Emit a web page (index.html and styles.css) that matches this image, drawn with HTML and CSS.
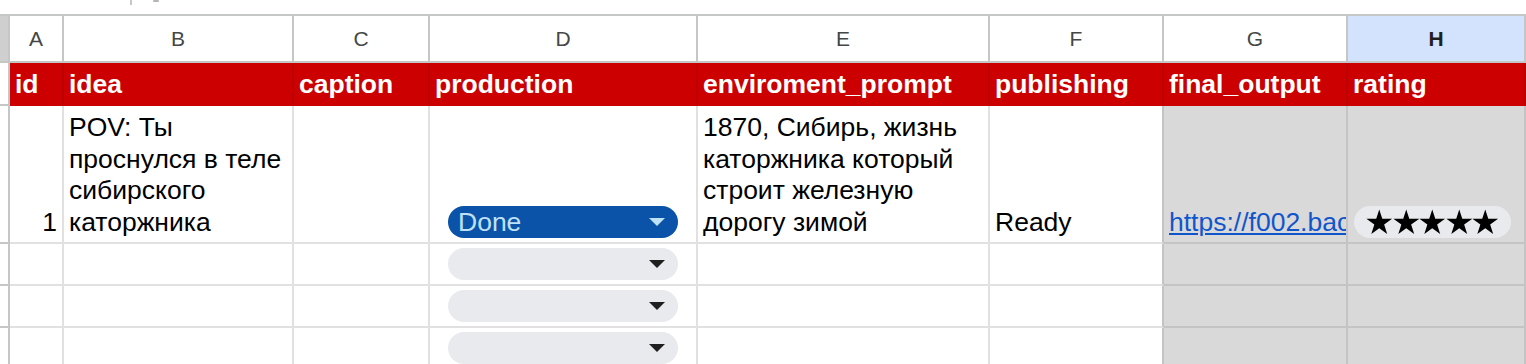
FILE: index.html
```html
<!DOCTYPE html>
<html lang="ru">
<head>
<meta charset="utf-8">
<title>Лист</title>
<link rel="stylesheet" href="styles.css">
</head>
<body>
<div class="toolbar-edge">
  <span class="toolbar-sep"></span>
  <span class="toolbar-mark"></span>
</div>

<div class="grid">
  <!-- column letters -->
  <div class="corner"></div>
  <div class="col-head">A</div>
  <div class="col-head">B</div>
  <div class="col-head">C</div>
  <div class="col-head">D</div>
  <div class="col-head">E</div>
  <div class="col-head">F</div>
  <div class="col-head">G</div>
  <div class="col-head col-head--selected">H</div>

  <!-- title row -->
  <div class="row-head"></div>
  <div class="cell cell--title"><span>id</span></div>
  <div class="cell cell--title"><span>idea</span></div>
  <div class="cell cell--title"><span>caption</span></div>
  <div class="cell cell--title"><span>production</span></div>
  <div class="cell cell--title"><span>enviroment_prompt</span></div>
  <div class="cell cell--title"><span>publishing</span></div>
  <div class="cell cell--title"><span>final_output</span></div>
  <div class="cell cell--title"><span>rating</span></div>

  <!-- row 1 -->
  <div class="row-head"></div>
  <div class="cell cell--num"><span>1</span></div>
  <div class="cell"><span>POV: Ты проснулся в теле сибирского каторжника</span></div>
  <div class="cell"></div>
  <div class="cell cell--chip">
    <span class="dropdown dropdown--done"><span class="dropdown-label">Done</span><span class="dropdown-arrow"></span></span>
  </div>
  <div class="cell"><span>1870, Сибирь, жизнь каторжника который строит железную дорогу зимой</span></div>
  <div class="cell cell--edge"><span>Ready</span></div>
  <div class="cell cell--shaded"><a class="link" href="#">https://f002.backblazeb2.com/file/output/final.mp4</a></div>
  <div class="cell cell--shaded cell--rating">
    <span class="rating">
      <svg class="star" viewBox="-13.25 -14 26.5 26"><polygon points="0,-13.5 3.03,-4.17 12.84,-4.17 4.9,1.59 7.94,10.92 0,5.16 -7.94,10.92 -4.9,1.59 -12.84,-4.17 -3.03,-4.17"/></svg>
      <svg class="star" viewBox="-13.25 -14 26.5 26"><polygon points="0,-13.5 3.03,-4.17 12.84,-4.17 4.9,1.59 7.94,10.92 0,5.16 -7.94,10.92 -4.9,1.59 -12.84,-4.17 -3.03,-4.17"/></svg>
      <svg class="star" viewBox="-13.25 -14 26.5 26"><polygon points="0,-13.5 3.03,-4.17 12.84,-4.17 4.9,1.59 7.94,10.92 0,5.16 -7.94,10.92 -4.9,1.59 -12.84,-4.17 -3.03,-4.17"/></svg>
      <svg class="star" viewBox="-13.25 -14 26.5 26"><polygon points="0,-13.5 3.03,-4.17 12.84,-4.17 4.9,1.59 7.94,10.92 0,5.16 -7.94,10.92 -4.9,1.59 -12.84,-4.17 -3.03,-4.17"/></svg>
      <svg class="star" viewBox="-13.25 -14 26.5 26"><polygon points="0,-13.5 3.03,-4.17 12.84,-4.17 4.9,1.59 7.94,10.92 0,5.16 -7.94,10.92 -4.9,1.59 -12.84,-4.17 -3.03,-4.17"/></svg>
    </span>
  </div>

  <!-- row 2 -->
  <div class="row-head"></div>
  <div class="cell"></div>
  <div class="cell"></div>
  <div class="cell"></div>
  <div class="cell cell--chip"><span class="dropdown"><span class="dropdown-arrow"></span></span></div>
  <div class="cell"></div>
  <div class="cell cell--edge"></div>
  <div class="cell cell--shaded"></div>
  <div class="cell cell--shaded"></div>

  <!-- row 3 -->
  <div class="row-head"></div>
  <div class="cell"></div>
  <div class="cell"></div>
  <div class="cell"></div>
  <div class="cell cell--chip"><span class="dropdown"><span class="dropdown-arrow"></span></span></div>
  <div class="cell"></div>
  <div class="cell cell--edge"></div>
  <div class="cell cell--shaded"></div>
  <div class="cell cell--shaded"></div>

  <!-- row 4 -->
  <div class="row-head"></div>
  <div class="cell"></div>
  <div class="cell"></div>
  <div class="cell"></div>
  <div class="cell cell--chip"><span class="dropdown"><span class="dropdown-arrow"></span></span></div>
  <div class="cell"></div>
  <div class="cell cell--edge"></div>
  <div class="cell cell--shaded"></div>
  <div class="cell cell--shaded"></div>
</div>
</body>
</html>
```

FILE: styles.css
```css
* {
  box-sizing: border-box;
}

html,
body {
  margin: 0;
}

body {
  width: 1526px;
  height: 364px;
  overflow: hidden;
  background: #fff;
  font-family: "Liberation Sans", Arial, sans-serif;
}

/* bottom edge of the toolbar above the grid */
.toolbar-edge {
  height: 14px;
  display: flex;
  align-items: flex-start;
  gap: 21px;
  padding-left: 130px;
}

.toolbar-sep {
  width: 2px;
  height: 5px;
  background: #c7c7c7;
}

.toolbar-mark {
  width: 6px;
  height: 2px;
  border-radius: 1px;
  background: #b5b5b5;
}

/* sheet grid */
.grid {
  display: grid;
  grid-template-columns: 10px 54px 230px 136px 268px 292px 174px 184px 178px;
  grid-template-rows: 47px 43px 138px 42px 42px 42px;
  border-top: 2px solid #c4c7c5;
}

.corner {
  background: #cfcfcf;
  border-right: 2px solid #c4c7c5;
  border-bottom: 2px solid #c4c7c5;
}

.col-head {
  border-right: 2px solid #c4c7c5;
  border-bottom: 2px solid #c4c7c5;
  text-align: center;
  font-size: 21px;
  line-height: 45px;
  color: #444746;
}

.col-head--selected {
  background: #d3e3fd;
  color: #1f1f1f;
  font-weight: bold;
}

.row-head {
  background: #fff;
  border-right: 2px solid #c4c7c5;
  border-bottom: 2px solid #c4c7c5;
}

.cell {
  display: flex;
  align-items: flex-end;
  min-width: 0;
  overflow: hidden;
  padding: 0 5px 3px;
  border-right: 2px solid #e1e1e1;
  border-bottom: 2px solid #e1e1e1;
  font-size: 26.5px;
  line-height: 31.8px;
  color: #000;
}

.cell--title {
  align-items: center;
  padding-bottom: 0;
  background: #cc0000;
  color: #fff;
  font-weight: bold;
  border-right-color: #bd0000;
  border-bottom: 0;
}

.cell--num {
  justify-content: flex-end;
}

.cell--edge {
  border-right-color: #c4c4c4;
}

.cell--shaded {
  background: #d9d9d9;
  border-right-color: #c4c4c4;
  border-bottom-color: #c4c4c4;
}

/* dropdown chips */
.cell--chip {
  padding: 0 18px 4px;
}

.dropdown {
  flex: 1;
  height: 32px;
  display: flex;
  align-items: center;
  padding: 0 13px 0 10px;
  border-radius: 16px;
  background: #e8eaed;
}

.dropdown--done {
  background: #0a53a8;
  color: #bfe1f6;
}

.dropdown-label {
  line-height: 32px;
}

.dropdown-arrow {
  margin-left: auto;
  width: 0;
  height: 0;
  border-left: 8.5px solid transparent;
  border-right: 8.5px solid transparent;
  border-top: 8.5px solid #1f1f1f;
}

.dropdown--done .dropdown-arrow {
  border-top-color: #bfe1f6;
}

/* hyperlink cell */
.link {
  color: #1155cc;
  text-decoration: underline;
  white-space: nowrap;
}

/* star rating chip */
.cell--rating {
  padding: 0 0 4px 6px;
}

.rating {
  display: flex;
  align-items: center;
  height: 32px;
  padding: 0 12px;
  border-radius: 16px;
  background: #e8eaed;
}

.star {
  display: block;
  width: 26.5px;
  height: 26px;
  fill: #000;
}
```
